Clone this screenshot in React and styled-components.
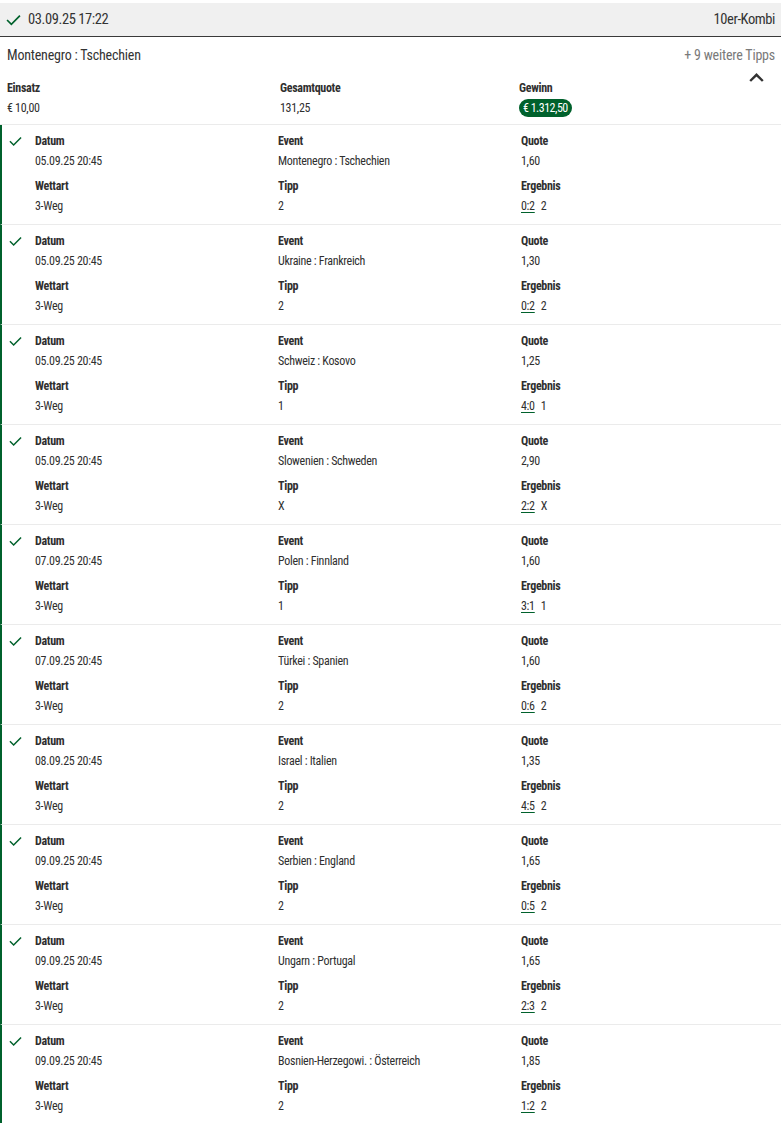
import React from "react";
import styled, { createGlobalStyle } from "styled-components";

const GREEN = "#00612c";

const Global = createGlobalStyle`
  html, body { margin: 0; padding: 0; background: #fff; }
  body {
    padding-top: 3px;
    font-family: "Roboto Condensed", "Roboto", "DejaVu Sans Condensed", sans-serif;
    font-stretch: condensed;
    letter-spacing: -0.3px;
    color: #333;
  }
`;

const Page = styled.div`
  width: 781px;
`;

const HeaderBar = styled.div`
  height: 33px;
  background: #f0f0f0;
  border-bottom: 1px solid #3a3a3a;
  display: flex;
  align-items: center;
  justify-content: space-between;
  padding: 0 6px 0 6px;
  font-size: 14.5px;
  letter-spacing: -0.4px;
`;

const HeaderLeft = styled.div`
  display: flex;
  align-items: center;
  gap: 7px;
`;

const Summary = styled.div`
  border-bottom: 1px solid #ebebeb;
  padding: 0 6px 6px 7px;
`;

const TitleRow = styled.div`
  display: flex;
  justify-content: space-between;
  align-items: center;
  height: 36px;
  font-size: 14px;
  letter-spacing: -0.2px;
`;

const More = styled.span`
  color: #7a7a7a;
`;

const SummaryGrid = styled.div`
  display: grid;
  grid-template-columns: 273px 239px 1fr auto;
  align-items: start;
  margin-top: 5px;
`;

const Label = styled.div`
  font-weight: 700;
  font-size: 12px;
  line-height: 20px;
  color: #2f2f2f;
`;

const Value = styled.div`
  font-size: 12px;
  line-height: 20px;
  color: #2f2f2f;
`;

const Badge = styled.span`
  display: inline-block;
  background: ${GREEN};
  color: #fff;
  border-radius: 9px;
  height: 18px;
  line-height: 18px;
  padding: 0 4px;
  font-size: 12px;
  letter-spacing: -0.5px;
`;

const Toggle = styled.div`
  padding: 0 11px 0 0;
  margin-top: -11px;
`;

const Bet = styled.div`
  display: grid;
  grid-template-columns: 33px 243px 243px 1fr;
  border-left: 2px solid ${GREEN};
  border-bottom: 1px solid #ebebeb;
  padding: 6px 0 8px 0;
`;

const CheckCell = styled.div`
  padding: 5px 0 0 7px;
  & > svg {
    display: block;
  }
`;

const Field = styled.div`
  & + & {
    margin-top: 5px;
  }
`;

const Column = styled.div``;

const Score = styled.span`
  text-decoration: underline;
  text-decoration-color: ${GREEN};
  text-underline-offset: 2px;
  margin-right: 6px;
`;

const Check = ({ size = 14 }) => (
  <svg width={size} height={size * 0.8} viewBox="0 0 14 11" fill="none">
    <polyline points="1,5.5 5,9.5 13,1.5" stroke={GREEN} strokeWidth="1.6" fill="none" />
  </svg>
);

const Chevron = () => (
  <svg width="15" height="9" viewBox="0 0 15 9" fill="none">
    <polyline points="1.2,8 7.5,1.8 13.8,8" stroke="#333" strokeWidth="2.4" fill="none" />
  </svg>
);

const bets = [
  ["05.09.25 20:45", "Montenegro : Tschechien", "1,60", "2", "0:2"],
  ["05.09.25 20:45", "Ukraine : Frankreich", "1,30", "2", "0:2"],
  ["05.09.25 20:45", "Schweiz : Kosovo", "1,25", "1", "4:0"],
  ["05.09.25 20:45", "Slowenien : Schweden", "2,90", "X", "2:2"],
  ["07.09.25 20:45", "Polen : Finnland", "1,60", "1", "3:1"],
  ["07.09.25 20:45", "Türkei : Spanien", "1,60", "2", "0:6"],
  ["08.09.25 20:45", "Israel : Italien", "1,35", "2", "4:5"],
  ["09.09.25 20:45", "Serbien : England", "1,65", "2", "0:5"],
  ["09.09.25 20:45", "Ungarn : Portugal", "1,65", "2", "2:3"],
  ["09.09.25 20:45", "Bosnien-Herzegowi. : Österreich", "1,85", "2", "1:2"],
];

export default function App() {
  return (
    <Page>
      <Global />
      <HeaderBar>
        <HeaderLeft>
          <Check size={15} />
          <span>03.09.25 17:22</span>
        </HeaderLeft>
        <span>10er-Kombi</span>
      </HeaderBar>
      <Summary>
        <TitleRow>
          <span>Montenegro : Tschechien</span>
          <More>+ 9 weitere Tipps</More>
        </TitleRow>
        <SummaryGrid>
          <Column>
            <Label>Einsatz</Label>
            <Value>€ 10,00</Value>
          </Column>
          <Column>
            <Label>Gesamtquote</Label>
            <Value>131,25</Value>
          </Column>
          <Column>
            <Label>Gewinn</Label>
            <Value>
              <Badge>€ 1.312,50</Badge>
            </Value>
          </Column>
          <Toggle>
            <Chevron />
          </Toggle>
        </SummaryGrid>
      </Summary>
      {bets.map(([date, event, quote, tipp, score], i) => (
        <Bet key={i}>
          <CheckCell>
            <Check size={13} />
          </CheckCell>
          <Column>
            <Field>
              <Label>Datum</Label>
              <Value>{date}</Value>
            </Field>
            <Field>
              <Label>Wettart</Label>
              <Value>3-Weg</Value>
            </Field>
          </Column>
          <Column>
            <Field>
              <Label>Event</Label>
              <Value>{event}</Value>
            </Field>
            <Field>
              <Label>Tipp</Label>
              <Value>{tipp}</Value>
            </Field>
          </Column>
          <Column>
            <Field>
              <Label>Quote</Label>
              <Value>{quote}</Value>
            </Field>
            <Field>
              <Label>Ergebnis</Label>
              <Value>
                <Score>{score}</Score>
                {tipp}
              </Value>
            </Field>
          </Column>
        </Bet>
      ))}
    </Page>
  );
}
